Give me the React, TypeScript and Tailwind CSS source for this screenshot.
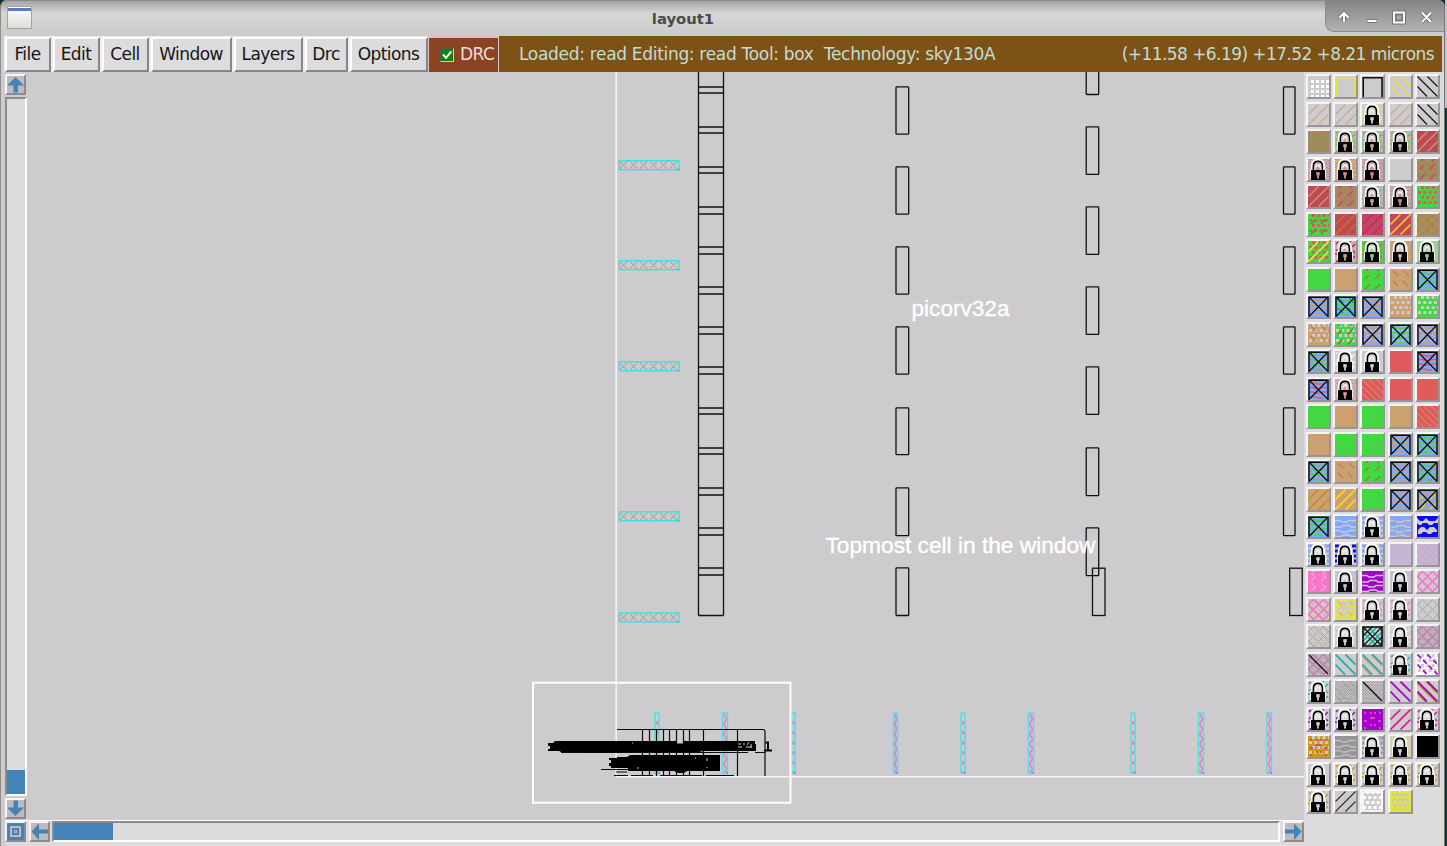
import React from "react";

const GRAY = "#cdcbcd";
const TAN = "#cda070";
const BROWN = "#ad8260";
const RED = "#bd4a55";
const ROSE = "#e05c5c";
const GREEN = "#43d843";
const BLUE = "#7fa8ff";
const DEEP = "#0a0aff";
const LAV = "#c3acd8";
const PURPLE = "#a400cd";
const PINK = "#ff73cd";
const MAGENTA = "#e0149c";
const YELLOW = "#e8e832";
const GOLD = "#c99a14";
const TEAL = "#26b0a4";
const INK = "#101010";
const DIM = "#a2a0a2";

type Layer = [kind: string, color: string];
type Cell = { bg?: string; layers?: Layer[]; lock?: boolean; cross?: boolean };

const plain = (bg: string, ...layers: Layer[]): Cell => ({ bg, layers });
const lock = (...layers: Layer[]): Cell => ({ layers, lock: true });
const xbox = (color: string, ...layers: Layer[]): Cell => ({
  bg: BLUE,
  layers: [["streak", color], ...layers],
  cross: true,
});

const ROWS: Cell[][] = [
  [plain(GRAY, ["dots", "#ffffff"]), plain(GRAY, ["frame", YELLOW]), plain(GRAY, ["frame", INK]), plain(GRAY, ["back", YELLOW]), plain(GRAY, ["back", INK])],
  [plain(GRAY, ["fwd", "#cda98c"]), plain(GRAY, ["fwd", "#cda98c"]), lock(["edge", YELLOW]), plain(GRAY, ["fwd", "#cda98c"]), plain(GRAY, ["back", INK])],
  [plain(BROWN, ["back", "#5cbc4c"]), lock(["dither", BROWN], ["edge", GREEN]), lock(["dither", BROWN], ["edge", GREEN]), lock(["dither", BROWN], ["edge", GREEN]), plain(RED, ["fwd", TAN])],
  [lock(["dither", RED]), lock(["dither", RED], ["edge", "#f5b400"]), lock(["dither", RED]), plain(GRAY), plain(BROWN, ["backdot", "#6fb04c"], ["dash", RED])],
  [plain(RED, ["fwd", TAN]), plain(BROWN, ["dash", RED]), lock(["dither", BROWN], ["edge", "#6fc98a"]), lock(["dither", RED]), plain(GREEN, ["spots", ROSE])],
  [plain(GREEN, ["spots", ROSE], ["dash", RED]), plain(RED, ["fwd", "#c87814"]), plain(RED, ["fwd", "#d2149c"]), plain(RED, ["fwdbold", "#f5c814"]), plain(BROWN, ["fwd", "#c8961e"], ["back", "#8aa850"])],
  [plain(GREEN, ["spots", ROSE], ["fwdbold", YELLOW]), lock(["dither", BROWN], ["edge", "#d2147c"]), lock(["corner", GREEN], ["edge", ROSE]), lock(["corner", TAN]), lock(["dither", GREEN])],
  [plain(GREEN), plain(TAN), plain(GREEN, ["dash", "#a07830"]), plain(TAN, ["bdash", BROWN]), xbox(GREEN)],
  [xbox(TAN), xbox(GREEN, ["bdash", "#209858"]), xbox(TAN), plain(TAN, ["spots", GRAY]), plain(GREEN, ["spots", GRAY])],
  [plain(TAN, ["spots", GRAY], ["bdash", BROWN]), plain(GREEN, ["spots", GRAY], ["dash", RED]), xbox(TAN, ["spots", "#a9b3cd"]), xbox(GREEN, ["spots", "#9fbdd5"]), xbox(TAN, ["spots", "#a9b3cd"])],
  [xbox(GREEN, ["spots", "#a8a0b0"]), lock(["edge", "#f2f2f2"]), lock(), plain(ROSE), xbox(ROSE)],
  [xbox(ROSE), lock(["dither", ROSE]), plain(ROSE, ["backfine", TAN]), plain(ROSE), plain(ROSE)],
  [plain(GREEN), plain(TAN), plain(GREEN), plain(TAN), plain(ROSE, ["backfine", TAN])],
  [plain(TAN), plain(GREEN), plain(GREEN), xbox(TAN), xbox(GREEN)],
  [xbox(GREEN, ["spots", "#b0a5b6"]), plain(TAN, ["bdash", BROWN]), plain(GREEN, ["dash", "#a07830"]), xbox(TAN), xbox(GREEN, ["dash", BROWN])],
  [plain(TAN, ["fwd", "#bc8c1c"]), plain(TAN, ["fwdbold", "#f5dc14"]), plain(GREEN), xbox(TAN), xbox(TAN, ["dash", "#f0cd20"])],
  [xbox(GREEN), plain(BLUE, ["brick", GRAY]), lock(["blocks", BLUE]), plain(BLUE, ["brick", GRAY], ["back", "#b8a6a0"]), plain(DEEP, ["tri", GRAY])],
  [lock(["blocks", BLUE]), lock(["blocks", DEEP]), lock(["blocks", BLUE]), plain("#c7bbd3", ["dither", LAV]), plain("#c7b3d5", ["backfine", "#caa2a8"])],
  [plain(PINK, ["bdash", "#d8a8cc"], ["dash", "#e6b0d2"]), lock(["dither", LAV]), plain(PURPLE, ["brick", GRAY]), lock(["dither", LAV]), plain(GRAY, ["netbold", PINK])],
  [plain(GRAY, ["backfine", TAN], ["netbold", PINK]), plain(GRAY, ["frame4", YELLOW], ["spots", YELLOW], ["bdash", "#e8b08c"]), lock(["edge", PINK]), lock(["edge", PINK]), plain(GRAY, ["net", "#a9a7a9"])],
  [plain(GRAY, ["net", "#aaa8aa"], ["backfine", "#cda98c"]), lock(["edge", "#dddddd"]), plain(GRAY, ["netbold", TEAL], ["frame4", INK], ["fwd", INK], ["slash", INK]), lock(["edge", "#e8e8e8"]), plain(GRAY, ["dither", "#8d8a8d"], ["netbold", "#ca7fb4"])],
  [plain(GRAY, ["dither", "#8d8a8d"], ["netbold", "#ca7fb4"], ["slash", INK]), plain(GRAY, ["backbold", TEAL]), plain(GRAY, ["backtan", TAN], ["backbold", TEAL]), lock(["edge", TEAL]), plain("#ffffff", ["spots", GRAY], ["backdot", PURPLE])],
  [lock(["edge", TEAL]), plain(GRAY, ["dither", "#858385"], ["backfine", DIM]), plain(GRAY, ["dither", "#858385"], ["slash", INK]), plain(GRAY, ["backbold", PURPLE]), plain(GRAY, ["backtan", "#c87814"], ["backbold", PURPLE])],
  [lock(["edge", PURPLE]), lock(["edge", PURPLE]), plain(PURPLE, ["flower", "#e040c4"]), plain(GRAY, ["fwdbold", MAGENTA]), lock(["edge", MAGENTA])],
  [plain(GOLD, ["spots", GRAY], ["flower", "#d84a70"]), plain("#969496", ["brick", "#c0bec0"]), lock(["blocks", DIM]), lock(["edge", YELLOW]), plain("#000000")],
  [lock(), lock(["edge", GOLD]), lock(["edge", GOLD]), lock(["edge", GOLD]), lock(["edge", GOLD])],
  [lock(["edge", GOLD]), plain(GRAY, ["fwd", "#303030"]), plain(GRAY, ["frame4", "#ffffff"], ["spots", "#ffffff"]), plain("#cfcf9c", ["frame4", YELLOW], ["spots", YELLOW])],
];

const BACK = "M0.5 10.5L10 20.5M0.5 0.5L20.5 20.5M10.5 0.5L20.5 10.5";
const BACK_LOW = "M0 12L8.5 21M0 2L19 21M9 0.5L21 12.5";
const FWD = "M0.5 10.5L10.5 0.5M0.5 20.5L20.5 0.5M10.5 20.5L20.5 10.5";
const FINE = "M0 14L7 21M0 7L14 21M0 0L21 21M7 0L21 14M14 0L21 7";
const NET = "M0 6L6 0M0 16L16 0M5 21L21 5M15 21L21 15M0 15L6 21M0 5L16 21M5 0L21 16M15 0L21 6";

function Pattern({ kind, color }: { kind: string; color: string }) {
  const line = (d: string, w = 1) => <path d={d} stroke={color} strokeWidth={w} fill="none" />;
  switch (kind) {
    case "dots":
      return <path d="M3 5H21M3 10H21M3 15H21M3 20H21" stroke={color} strokeWidth="3" strokeDasharray="3 2" shapeRendering="crispEdges" />;
    case "spots":
      return (
        <g stroke={color} strokeWidth="3">
          <path d="M4 1.5H21M4 11.5H21" strokeDasharray="3 2.3" />
          <path d="M1 6.5H21M1 16.5H21" strokeDasharray="3 2.3" />
        </g>
      );
    case "frame":
      return line("M1.2 21V1.7H20V21", 1.6);
    case "frame4":
      return line("M1 1H20V20H1Z", 1.6);
    case "back":
      return line(BACK, 1.1);
    case "backbold":
      return line(BACK, 1.8);
    case "backtan":
      return line(BACK_LOW, 1.2);
    case "backfine":
      return line(FINE, 0.9);
    case "backdot":
      return <path d={BACK} stroke={color} strokeWidth="1.7" strokeDasharray="5 3" />;
    case "fwd":
      return line(FWD, 1.1);
    case "fwdbold":
      return line(FWD, 1.6);
    case "net":
      return line(NET);
    case "netbold":
      return line(NET, 1.7);
    case "slash":
      return line("M1 1L20 20", 1.4);
    case "dash":
      return line("M3 10L7 6M13 10L18 5M3 20L8 15M13 20L18 15M15 2L17 0M4 2L6 0", 1.2);
    case "bdash":
      return line("M3 2L8 7M14 2L19 7M3 12L8 17M13 12L18 17", 1.2);
    case "brick":
      return line("M0 4.5H5L7 6H12L14 4.5H21M0 11H6L8 9.5H14L16 11H21M0 14.5H5L7 16H12L14 14.5H21M0 20.5H6L8 19H14L16 20.5H21", 1.4);
    case "tri":
      return <path d="M0 2L3 5H0ZM6 5L9 2L12 5H18L21 2V7H17L15 9H12L10 7H6L4 9H2L0 7V5ZM1 14L4 11H7L10 14L13 11H17L20 14V16H16L14 18H11L9 16H6L4 18H1Z" fill={color} />;
    case "streak":
      return line("M2 4H7L9 5H14L16 4H20M1 8.5H6L8 10H12L14 8.5H20M1 13H5L7 14H13L15 13H20M2 18H8L10 19H15M3 0.6H17", 1.7);
    case "dither":
      return (
        <g stroke={color} strokeWidth="1" strokeDasharray="1.3 1.3" opacity="0.85">
          {[0.6, 3.2, 5.8, 8.4, 11, 13.6, 16.2, 18.8].map((y) => (
            <path key={y} d={`M0 ${y}H21M1.3 ${y + 1.3}H21`} />
          ))}
        </g>
      );
    case "edge":
      return line("M1 3L3 1M17 6L20 3M17 18L20 15M0 13H2M1 20H3M18 10L20 12M3 8L1 10M14 1H16", 1.4);
    case "corner":
      return <path d="M0 0H21V21H18V5L14 1H7L3 6V21H0Z" fill={color} />;
    case "blocks":
      return line("M0 2H4M17 2H21M0 7H3M18 7H21M0 12H2M19 12H21M0 17H2M19 17H21", 3);
    case "flower":
      return line("M2 4H4M8 4H10M12 4H14M17 4H19M8 9H13M2 12H5M16 12H19M8 16H10M12 16H14M2 19H4M17 19H19", 2);
    default:
      return null;
  }
}

function Swatch({ cell }: { cell: Cell }) {
  const tint = cell.layers?.[0]?.[0] === "dither" || cell.layers?.[0]?.[0] === "corner" ? cell.layers[0][1] : GRAY;
  return (
    <div className="flex h-[25px] w-[25px] border-2 border-t-[#f6f5f6] border-r-[#979597] border-b-[#979597] border-l-[#f6f5f6] bg-[#cdcbcd]">
      <svg width="21" height="21" viewBox="0 0 21 21" className="block">
        <rect width="21" height="21" fill={cell.bg ?? GRAY} />
        {cell.layers?.map(([kind, color], i) => <Pattern key={i} kind={kind} color={color} />)}
        {cell.cross && (
          <g fill="none" stroke="#06080c">
            <path d="M1 21V1.2H20V21" strokeWidth="1.4" />
            <path d="M1.5 1.5L19.5 20M19.5 1.5L1.5 20" strokeWidth="1.1" />
          </g>
        )}
        {cell.lock && (
          <g>
            <path d="M4.8 11V7C4.8 3.4 6.8 1.6 9.9 1.6S15 3.4 15 7V11" fill="none" stroke="#fff" strokeOpacity="0.9" strokeWidth="4.2" />
            <path d="M2 10.5H18V19H2Z" fill="#fff" fillOpacity="0.8" />
            <path d="M5.4 11.5V7.4C5.4 4.2 7.2 2.4 9.9 2.4S14.4 4.2 14.4 7.4V11.5" fill="none" stroke="#000" strokeWidth="1.6" />
            <path d="M7.3 11V7.4Q7.6 4.8 9.9 4.8T12.5 7.4V11Z" fill="#f0eff0" />
            <path d="M8 11V9L9.9 7L11.8 9V11Z" fill={tint} fillOpacity="0.6" />
            <path d="M3 11H17V21H3Z" fill="#000" />
            <path d="M8.4 13.2H11.6V16.2H10.8V19.4H9.2V16.2H8.4Z" fill="#dad8da" />
            <path d="M8.4 13.2H11.6V16.2H10.8V19.4H9.2V16.2H8.4Z" fill={tint} fillOpacity="0.55" />
          </g>
        )}
      </svg>
    </div>
  );
}

const HATCH_Y = [160.7, 260.7, 361.8, 511.8, 612.8];
const RUNGS = [87, 93, 127, 133, 167, 173, 207, 214, 247, 254, 287, 294, 327, 334, 367, 374, 408, 414, 448, 454, 488, 495, 528, 535, 568, 575, 615.5];
const EVEN: [number, number][] = [[86.8, 134.2], [166.8, 214.2], [246.8, 294.2], [326.8, 374.2], [407.8, 454.6], [487.8, 535.6]];
const ODD: [number, number][] = [[60, 94.5], [126.8, 174.4], [206.8, 254.4], [286.8, 334.4], [366.8, 414.4], [447.8, 495.6], [527.8, 575.6]];
const PINS: [number, number][] = [[655, 4], [722.5, 5], [791.5, 3.5], [893.5, 4], [961, 4], [1028.5, 5], [1131, 4], [1198.5, 5], [1267, 4.5]];

function Drawing() {
  return (
    <svg width="1276" height="748" viewBox="28 72 1276 748" className="block shrink-0">
      <rect x="28" y="72" width="1276" height="748" fill="#cdcbcd" />
      <path d="M616.2 72V776.8H1304" fill="none" stroke="#f5f4f5" strokeWidth="1.5" />
      {HATCH_Y.map((y) => (
        <g key={y} fill="none">
          <path
            d={[0, 1, 2, 3, 4, 5].map((i) => `M${620 + i * 10} ${y + 1}L${628 + i * 10} ${y + 9}M${628 + i * 10} ${y}L${620 + i * 10} ${y + 8}`).join("")}
            stroke="#aaa8aa"
            strokeWidth="1.1"
          />
          <rect x="619.5" y={y} width="59.5" height="9" stroke="#37e4e4" strokeWidth="1.4" />
          <rect x="678" y={y + 8.5} width="1" height="1" fill="#3468c0" />
        </g>
      ))}
      <g fill="none" stroke="#121012" strokeWidth="1.3">
        <path d="M698.5 72V615.5M723.5 72V615.5" />
        <path d={RUNGS.map((y) => `M698.5 ${y}H723.5`).join("")} />
        {[...EVEN, [567.8, 615.5] as [number, number]].map(([a, b]) => <rect key={a} x="896" y={a} width="12.7" height={b - a} rx="0.7" />)}
        {ODD.map(([a, b]) => <rect key={a} x="1086.2" y={a} width="12.5" height={b - a} rx="0.7" />)}
        {EVEN.map(([a, b]) => <rect key={a} x="1283.5" y={a} width="11.5" height={b - a} rx="0.7" />)}
        <rect x="1092.5" y="568.2" width="12.5" height="47.3" />
        <rect x="1289.7" y="568.2" width="12.5" height="47.3" />
      </g>
      {PINS.map(([x, w]) => (
        <g key={x} fill="none">
          {w <= 4 && x !== 893.5 ? (
            <path d={`M${x + w / 2 + 0.4} 721V773`} stroke="#fb76cd" strokeWidth="2.6" strokeDasharray="3.6 6.4" />
          ) : (
            <path
              d={`M${x + 1.2} 714` + Array.from({ length: 6 }, (_, i) => `L${x + w - 1} ${719 + i * 10}L${x + 1.2} ${724 + i * 10}`).join("")}
              stroke={x === 893.5 ? "#c98ad0" : "#f57acb"}
              strokeWidth="1.7"
            />
          )}
          <rect x={x} y="713" width={w} height="60" stroke="#4fdfe2" strokeWidth="1.4" />
          <rect x={x + w - 0.7} y="772.4" width="1.2" height="1.2" fill="#3468c0" />
        </g>
      ))}
      <g stroke="#0c0c0c" fill="none" strokeWidth="1.2">
        <path d="M617 729.5H763Q765 729.5 765 732V776M642.5 729.5V776M649.5 729.5V776M656.5 729.5V776M663.5 729.5V776M669.5 729.5V776M676.5 729.5V776M683.5 729.5V776M689.5 729.5V776M703.5 729.5V776M737.5 729.5V776" />
        <path d="M561 752.5H748M755 752.5H765M601 769.5H628M616 772H627M614 775.5H628M631 775.5H653M660 775.5H702M706 775.5H734" />
      </g>
      <path
        d="M548 743H553L555 741H676V743.5H683V741H755V744H756V751H703L699 752H624L619 753H589L586 752H561L559 751H548V749H550V746H548Z"
        fill="#000"
      />
      <path d="M609 758H617V757H627L630 755H720V771H687L684 773H678L674 771H628V768H611V766H609V763H611V760H609Z" fill="#000" />
      <path d="M632 743H633M738 744H741M743 744H745M738 747H742M749 742L747 745M746 747H752M751 744V748M695 758H696M707 758V761M637 768H639M707 768V767" stroke="#cdcbcd" strokeWidth="1" />
      <path d="M765.5 742.5H768V750M764 750.5H772" stroke="#080808" fill="none" strokeWidth="2" />
      <rect x="533" y="682.7" width="257.5" height="120" fill="none" stroke="#fff" strokeWidth="2" />
      <g fill="#ffffff" stroke="#ffffff" strokeWidth="0.35" fontFamily="'Liberation Sans', Arial, sans-serif" fontSize="22.4">
        <text x="911.5" y="316" textLength="98" lengthAdjust="spacingAndGlyphs">picorv32a</text>
        <text x="825.5" y="552.5" textLength="270" lengthAdjust="spacingAndGlyphs">Topmost cell in the window</text>
      </g>
    </svg>
  );
}

function ArrowButton({ d }: { d: string }) {
  return (
    <div className="flex h-[21px] w-[21px] shrink-0 items-center justify-center border-2 border-t-[#f6f5f6] border-r-[#8c8a8c] border-b-[#8c8a8c] border-l-[#f6f5f6] bg-[#bdbbbd]">
      <svg width="17" height="17" viewBox="0 0 17 17">
        <path d={d} fill="#4383b8" fillRule="evenodd" />
      </svg>
    </div>
  );
}

function MenuItem({ label, width }: { label: string; width: string }) {
  return (
    <div className={`${width} flex h-[35px] shrink-0 items-center justify-center border-2 border-t-white border-r-[#878587] border-b-[#878587] border-l-white bg-[#dddbdd] pr-px text-[17px] tracking-[-0.55px] text-[#161616]`}>
      {label}
    </div>
  );
}

function TitleBar() {
  return (
    <div className="flex h-[36px] shrink-0 items-start rounded-t-[7px] border-t border-[#8a8a8a] bg-linear-to-b from-[#a5a5a5] via-[#d6d6d6] via-35% to-[#cbcbcb] pl-[6px]">
      <div className="mt-[5px] h-[23px] w-[25px] border border-[#a3a3a3] bg-linear-to-b from-white to-[#dcdfd5]">
        <div className="mt-px h-[3px] bg-[#5a7db8]" />
      </div>
      <div className="flex-1 pt-[7px] pl-[9px] text-center text-[14.8px] font-bold leading-[22px] text-[#4b4b4b]">layout1</div>
      <div className="-mt-px h-[32px] w-[119px] shrink-0 rounded-bl-[9px] rounded-tr-[7px] border-b border-l border-[#8a8a8a] bg-linear-to-b from-[#858385] to-[#b4b2b4]">
        <svg width="118" height="31" viewBox="1326 0 118 31">
          <g stroke="#767476" strokeWidth="4" fill="none">
            <path d="M1344 22V14M1339.5 17.5L1344 13L1348.5 17.5M1367 21H1377M1394 12.5H1404V22.5H1394ZM1422 12.5L1431 22M1431 12.5L1422 22" />
          </g>
          <g stroke="#fff" strokeWidth="2" fill="none">
            <path d="M1344 22V14M1339.5 17.5L1344 13L1348.5 17.5M1367.5 21H1376.5M1394 12.5H1404V22.5H1394ZM1422 12.5L1431 22M1431 12.5L1422 22" />
          </g>
          <rect x="1396" y="15" width="6" height="5" fill="#aaa8aa" stroke="#767476" />
        </svg>
      </div>
    </div>
  );
}

export default function App() {
  return (
    <div className="flex h-[846px] w-[1447px] overflow-hidden bg-[#0c3430] font-['DejaVu_Sans',sans-serif]">
      <div className="flex w-[1445px] shrink-0 flex-col rounded-t-[7px] border-r border-l border-r-[#777577] border-l-[#8e8c8e] bg-[#cdcbcd]">
        <TitleBar />
        <div className="flex h-[36px] shrink-0 items-start pl-[3px]">
          <div className="flex h-[36px] shrink-0 gap-[2px] border-t border-l border-[#efeeef] bg-[#efeeef]">
            <MenuItem label="File" width="w-[46px]" />
            <MenuItem label="Edit" width="w-[47px]" />
            <MenuItem label="Cell" width="w-[47px]" />
            <MenuItem label="Window" width="w-[81px]" />
            <MenuItem label="Layers" width="w-[69px]" />
            <MenuItem label="Drc" width="w-[43px]" />
            <MenuItem label="Options" width="w-[78px]" />
          </div>
          <div className="flex h-[36px] w-[71px] shrink-0 items-center gap-[6px] border-t-2 border-r border-l border-[#d8c4bc] bg-[#8b4423] pl-[11px] text-[17px] tracking-[-0.55px] text-[#f0dcd8]">
            <div className="mb-px h-[14px] w-[14px] shrink-0 border border-t-[#555] border-r-[#d8d0c8] border-b-[#d8d0c8] border-l-[#555] bg-[#0c840c]">
              <svg width="12" height="12" viewBox="0 0 12 12">
                <path d="M2 5.5L5 8.8L10.3 2.5" stroke="#fff" strokeWidth="2" fill="none" />
              </svg>
            </div>
            DRC
          </div>
          <div className="flex h-[36px] w-[943px] shrink-0 items-center justify-between bg-[#7d5217] pt-[2px] pr-[8px] pl-[20px] text-[17px] whitespace-pre text-[#c3dcd3]">
            <span className="tracking-[-0.31px]">{"Loaded: read Editing: read Tool: box  Technology: sky130A"}</span>
            <span className="tracking-[-0.57px]">(+11.58 +6.19) +17.52 +8.21 microns</span>
          </div>
        </div>
        <div className="flex min-h-0 flex-1 pl-[4px]">
          <div className="flex w-[1299px] shrink-0 flex-col">
            <div className="flex h-[748px] shrink-0">
              <div className="flex w-[23px] shrink-0 flex-col items-start gap-[2px] pt-[2px]">
                <ArrowButton d="M8.5 1L17 9.5H11V16.5H6.5V9.5H0Z" />
                <div className="flex h-[699px] w-[22px] flex-col justify-end border-2 border-t-[#8c8a8c] border-r-white border-b-white border-l-[#8c8a8c] bg-[#dddbdd]">
                  <div className="h-[24px] bg-[#4383b8]" />
                </div>
                <ArrowButton d="M8.5 16L17 7.5H11V0.5H6.5V7.5H0Z" />
              </div>
              <Drawing />
            </div>
            <div className="flex h-[26px] items-start gap-[3px] border-t border-white bg-[#dddbdd]">
              <ArrowButton d="M0 0H17V17H0ZM3 3V14H14V3ZM5 5H12V12H5ZM7 7V10H10V7ZM8 8H9V9H8Z" />
              <ArrowButton d="M0.5 8.5L8 0.5V6.5H17V10.5H8V17Z" />
              <div className="-ml-px h-[21px] w-[1229px] border-2 border-t-[#8c8a8c] border-r-white border-b-white border-l-[#8c8a8c]">
                <div className="h-[17px] w-[59px] bg-[#4383b8]" />
              </div>
              <ArrowButton d="M16.5 8.5L9 0.5V6.5H0V10.5H9V17Z" />
            </div>
          </div>
          <div className="flex w-[140px] shrink-0 flex-col gap-[2.5px] bg-[#dddbdd] pt-[2px] pl-[1.5px]">
            {ROWS.map((row, r) => (
              <div key={r} className="flex h-[25px] shrink-0 gap-[2.4px]">
                {row.map((cell, c) => <Swatch key={c} cell={cell} />)}
              </div>
            ))}
          </div>
        </div>
      </div>
      <div className="h-[108px] w-[2px] bg-[#c4c2c4]" />
    </div>
  );
}
